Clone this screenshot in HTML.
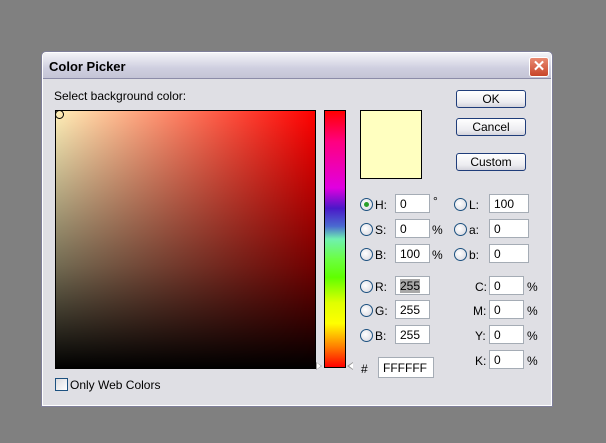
<!DOCTYPE html>
<html><head><style>
body{margin:0;width:606px;height:443px;background:#808080;position:relative;overflow:hidden;font-family:"Liberation Sans",sans-serif;font-size:12px;color:#000}
.a{position:absolute}
.dlg{left:42px;top:52px;width:508px;height:352px;background:#dfdfe4;border:1px solid #fff;box-shadow:0 0 0 1px #7f7f9a;border-radius:4px 4px 0 0}
.title{left:0;top:0;width:508px;height:25px;background:linear-gradient(#f3f3f8,#cfcfe0 60%,#c4c4d6);border-bottom:1px solid #8c8ca8;border-radius:4px 4px 0 0}
.btn{width:68px;height:16px;border:1px solid #1f3d7a;border-radius:3px;background:linear-gradient(#fff,#ececf0 70%,#d3d3dc);text-align:center;line-height:16px;font-size:12px}
.inp{height:19px;background:#fff;border:1px solid #a5acb5;box-sizing:border-box;line-height:18px;padding-left:4px;font-size:12px}
.rad{width:11px;height:11px;border:1px solid #1c5180;border-radius:50%;background:radial-gradient(circle at 40% 40%,#fff,#d4d4dc)}
.tri{width:0;height:0;border-top:4px solid transparent;border-bottom:4px solid transparent}
</style></head><body>
<div class="a dlg">
 <div class="a title"><span class="a" style="left:6px;top:6px;font-weight:bold;font-size:13px">Color Picker</span>
  <div class="a" style="left:486px;top:4px;width:18px;height:18px;border:1px solid #fff;border-radius:3px;background:linear-gradient(#e98a72,#c8452a);color:#fff;font-weight:bold;text-align:center;line-height:18px;font-size:15px">✕</div>
 </div>
</div>
<span class="a" style="left:54px;top:89px">Select background color:</span>
<div class="a" style="left:55px;top:110px;width:259px;height:257px;border:1px solid #000;background:linear-gradient(rgba(0,0,0,0),rgba(0,0,0,0.55) 60%,#000),linear-gradient(to right,#ffefb8,#ff0000)"></div>
<div class="a" style="left:55px;top:110px;width:7px;height:7px;border:1px solid #000;border-radius:50%;background:transparent"></div>
<div class="a" style="left:324px;top:110px;width:20px;height:256px;border:1px solid #000;background:linear-gradient(#ff0000,#ff0080 12%,#e000e0 30%,#4a18c8 38%,#4a6ad0 45%,#70f0b0 50%,#6bff40 58%,#60ff00 65%,#e0ff00 75%,#ffff00 83%,#ff8000 92%,#ff0000)"></div>
<div class="a tri" style="left:316px;top:362px;border-left:6px solid #999"></div>
<div class="a tri" style="left:317px;top:363px;border-top-width:3px;border-bottom-width:3px;border-left:4px solid #fff"></div>
<div class="a tri" style="left:347px;top:362px;border-right:6px solid #999"></div>
<div class="a tri" style="left:349px;top:363px;border-top-width:3px;border-bottom-width:3px;border-right:4px solid #fff"></div>
<div class="a" style="left:360px;top:110px;width:60px;height:67px;border:1px solid #000;background:#ffffc0"></div>
<div class="a btn" style="left:456px;top:90px">OK</div>
<div class="a btn" style="left:456px;top:118px">Cancel</div>
<div class="a btn" style="left:456px;top:153px">Custom</div>

<div class="a rad" style="left:360px;top:198px"><div class="a" style="left:3px;top:3px;width:5px;height:5px;border-radius:50%;background:#2aa02a"></div></div>
<span class="a" style="left:375px;top:198px">H:</span><div class="a inp" style="left:395px;top:194px;width:35px">0</div><span class="a" style="left:433px;top:194px">°</span>
<div class="a rad" style="left:360px;top:223px"></div><span class="a" style="left:375px;top:223px">S:</span><div class="a inp" style="left:395px;top:219px;width:35px">0</div><span class="a" style="left:432px;top:223px">%</span>
<div class="a rad" style="left:360px;top:248px"></div><span class="a" style="left:375px;top:248px">B:</span><div class="a inp" style="left:395px;top:244px;width:35px">100</div><span class="a" style="left:432px;top:248px">%</span>
<div class="a rad" style="left:360px;top:280px"></div><span class="a" style="left:375px;top:280px">R:</span><div class="a inp" style="left:395px;top:276px;width:35px"><span style="background:#a8a8a8">255</span></div>
<div class="a rad" style="left:360px;top:304px"></div><span class="a" style="left:375px;top:304px">G:</span><div class="a inp" style="left:395px;top:300px;width:35px">255</div>
<div class="a rad" style="left:360px;top:329px"></div><span class="a" style="left:375px;top:329px">B:</span><div class="a inp" style="left:395px;top:325px;width:35px">255</div>

<div class="a rad" style="left:454px;top:198px"></div><span class="a" style="left:469px;top:198px">L:</span><div class="a inp" style="left:489px;top:194px;width:40px">100</div>
<div class="a rad" style="left:454px;top:223px"></div><span class="a" style="left:469px;top:223px">a:</span><div class="a inp" style="left:489px;top:219px;width:40px">0</div>
<div class="a rad" style="left:454px;top:248px"></div><span class="a" style="left:469px;top:248px">b:</span><div class="a inp" style="left:489px;top:244px;width:40px">0</div>

<span class="a" style="left:475px;top:280px">C:</span><div class="a inp" style="left:489px;top:276px;width:35px">0</div><span class="a" style="left:527px;top:280px">%</span>
<span class="a" style="left:473px;top:304px">M:</span><div class="a inp" style="left:489px;top:300px;width:35px">0</div><span class="a" style="left:527px;top:304px">%</span>
<span class="a" style="left:475px;top:329px">Y:</span><div class="a inp" style="left:489px;top:325px;width:35px">0</div><span class="a" style="left:527px;top:329px">%</span>
<span class="a" style="left:475px;top:354px">K:</span><div class="a inp" style="left:489px;top:350px;width:35px">0</div><span class="a" style="left:527px;top:354px">%</span>

<span class="a" style="left:361px;top:362px">#</span><div class="a inp" style="left:378px;top:357px;width:56px;height:21px;line-height:20px">FFFFFF</div>
<div class="a" style="left:55px;top:378px;width:11px;height:11px;border:1px solid #1c5180;background:linear-gradient(135deg,#dcdce0,#fff)"></div>
<span class="a" style="left:70px;top:378px">Only Web Colors</span>
</body></html>
